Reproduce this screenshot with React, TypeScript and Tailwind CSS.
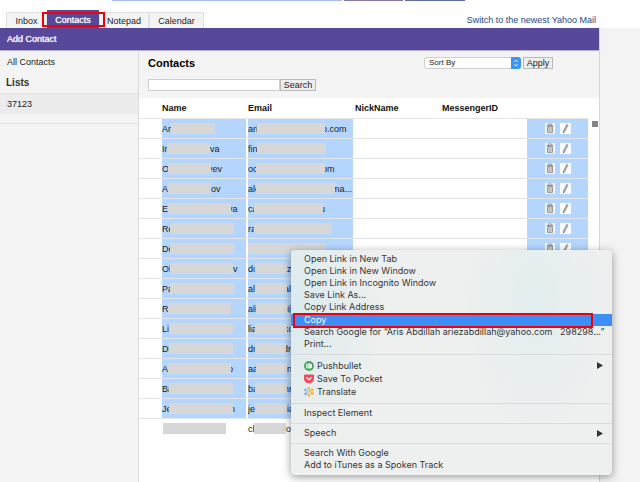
import React from "react";

type Masked = { pre: string; lead: number; mask: number; post?: string; tuck?: boolean };
type Contact = { name: Masked; email: Masked; selected: boolean };

const m = (pre: string, lead: number, mask: number, post = "", tuck = false): Masked => ({ pre, lead, mask, post, tuck });

const contacts: Contact[] = [
  { name: m("Ar", 9, 44), email: m("ari", 9, 68, "o.com", true), selected: true },
  { name: m("Ir", 5, 43, "va"), email: m("fin", 9, 69), selected: true },
  { name: m("O", 6, 43, "yev", true), email: m("oc", 8, 69, "om", true), selected: true },
  { name: m("A", 6, 43, "ov"), email: m("ale", 8, 79, "ma...", true), selected: true },
  { name: m("E", 6, 63, "va", true), email: m("ca", 6, 69, "u", true), selected: true },
  { name: m("Re", 8, 64), email: m("ra", 6, 78), selected: true },
  { name: m("De", 8, 64), email: m("", 0, 78), selected: true },
  { name: m("Ol", 8, 63, "v"), email: m("do", 7, 32, "z"), selected: true },
  { name: m("Pa", 8, 64), email: m("al", 7, 32, "ale", true), selected: true },
  { name: m("R", 6, 63), email: m("ali", 8, 31, "@"), selected: true },
  { name: m("Li", 7, 64), email: m("lia", 7, 32, "ko", true), selected: true },
  { name: m("Dr", 7, 64), email: m("dr", 7, 31, "dro", true), selected: true },
  { name: m("A", 6, 63, "o", true), email: m("aa", 8, 31, "n"), selected: true },
  { name: m("Ba", 7, 64), email: m("ba", 7, 32, "nn", true), selected: true },
  { name: m("Je", 7, 64, "n", true), email: m("je", 7, 32, "ia"), selected: true },
  { name: m("", 1, 63), email: m("cl", 6, 32, "o"), selected: false },
];

function MaskedText({ value, selected }: { value: Masked; selected: boolean }) {
  return (
    <div className={`flex h-[19px] items-center whitespace-nowrap ${selected ? "bg-[#b4d5fd]" : ""}`}>
      <span className="shrink-0" style={{ width: value.lead }}>
        {value.pre}
      </span>
      <span className="relative z-10 h-[11px] shrink-0 bg-[#d7d7d7]" style={{ width: value.mask }} />
      <span className={value.tuck ? "-ml-[3px]" : ""}>{value.post}</span>
    </div>
  );
}

function TrashIcon() {
  return (
    <svg viewBox="0 0 10 11" className="h-[11px] w-[10px]" aria-hidden="true">
      <rect width="10" height="11" fill="#f3f5f7" />
      <path d="M3.5 1.8V.9h3v.9" fill="none" stroke="#8a8a8a" strokeWidth=".8" />
      <path d="M1.7 2.4h6.6" stroke="#858585" strokeWidth="1" />
      <path d="M2.5 3.6h5v6h-5z" fill="#cfcfcf" stroke="#868686" strokeWidth=".8" />
      <path d="M4.200 4.200v4.800M5.800 4.200v4.800" stroke="#a5a5a5" strokeWidth=".5" />
    </svg>
  );
}

function PencilIcon() {
  return (
    <svg viewBox="0 0 11 11" className="h-[11px] w-[11px]" aria-hidden="true">
      <rect width="11" height="11" fill="#fbfcfd" />
      <path d="M6.600 1.200l1.600.8-3.200 6.400-1.700 1.600.1-2.300z" fill="#a6a6a6" stroke="#909090" strokeWidth=".5" />
      <path d="M3.300 8.600l-.1 1.600 1.100-.9z" fill="#444" />
    </svg>
  );
}

function PushbulletIcon() {
  return (
    <svg viewBox="0 0 10 10" className="size-[10px]" aria-hidden="true">
      <circle cx="5" cy="5" r="5" fill="#46a961" />
      <path d="M2.300 2.500h1.300v5H2.300zM4.300 2.500h1.300a2.500 2.500 0 0 1 0 5H4.300z" fill="#fff" />
    </svg>
  );
}

function PocketIcon() {
  return (
    <svg viewBox="0 0 10 10" className="size-[10px]" aria-hidden="true">
      <path d="M1 .5h8a1 1 0 0 1 1 1V4.600a5 4.900 0 0 1-10 0V1.500a1 1 0 0 1 1-1z" fill="#ee4a5e" />
      <path d="M2.700 3.600L5 5.800l2.300-2.200" fill="none" stroke="#fff" strokeWidth="1.300" strokeLinecap="round" strokeLinejoin="round" />
    </svg>
  );
}

function TranslateIcon() {
  return (
    <svg viewBox="0 0 10 10" className="size-[10px]" aria-hidden="true">
      <g fill="#6cabf0">
        <circle cx="1.500" cy="3" r="1.300" />
        <circle cx="1.600" cy="6.800" r="1.400" />
        <circle cx="3.600" cy="5" r=".9" />
      </g>
      <g fill="#f7b941">
        <circle cx="4.700" cy="1.500" r="1.400" />
        <circle cx="8" cy="2.800" r="1.500" />
        <circle cx="8.300" cy="6.400" r="1.500" />
        <circle cx="4.900" cy="8.400" r="1.400" />
        <path d="M4.700 1.400L5.600 4.500M8 2.800L6 4.800M8.300 6.400L6 5.400M4.900 8.500L5.400 6" stroke="#f7b941" strokeWidth="1.200" />
      </g>
    </svg>
  );
}

function MenuItem({ children, icon, submenu, active }: { children: React.ReactNode; icon?: React.ReactNode; submenu?: boolean; active?: boolean }) {
  return (
    <button
      type="button"
      role="menuitem"
      className={`flex w-full items-center gap-[3px] whitespace-pre pr-[9px] pl-[13px] text-left ${icon ? "h-[13px]" : "h-3"} ${active ? "bg-[#3f8ef8] text-white" : ""}`}
    >
      {icon}
      <span className="flex-1">{children}</span>
      {submenu && (
        <svg viewBox="0 0 6 7" className="h-[7px] w-[6px]" aria-hidden="true">
          <path d="M0 0l6 3.500L0 7z" fill="#333" />
        </svg>
      )}
    </button>
  );
}

function ContextMenu() {
  return (
    <div
      role="menu"
      className="absolute top-[250px] left-[291px] z-20 w-[321px] divide-y divide-[#dadcdc] rounded-[4px] bg-[#eeefef] bg-[radial-gradient(ellipse_90px_130px_at_0px_60px,#d9eaef,transparent),radial-gradient(ellipse_70px_130px_at_245px_50px,#e2eeef,transparent)] font-[family-name:Inter,sans-serif] text-[9px] leading-3 text-[#333637] shadow-[0_2px_8px_rgba(0,0,0,0.4)]"
    >
      <div className="pt-[3px] pb-1">
        <MenuItem>Open Link in New Tab</MenuItem>
        <MenuItem>Open Link in New Window</MenuItem>
        <MenuItem>Open Link in Incognito Window</MenuItem>
        <MenuItem>Save Link As...</MenuItem>
        <MenuItem>Copy Link Address</MenuItem>
        <div className="relative mt-px">
          <MenuItem active>Copy</MenuItem>
          <span className="pointer-events-none absolute -top-[1px] right-[19px] -bottom-[2px] left-[2px] border-2 border-[#f00008]" />
        </div>
        <MenuItem>{"Search Google for “Aris Abdillah ariezabdillah@yahoo.com   298298...”"}</MenuItem>
        <MenuItem>Print...</MenuItem>
      </div>
      <div className="pt-1 pb-[5px]">
        <MenuItem icon={<PushbulletIcon />} submenu>Pushbullet</MenuItem>
        <MenuItem icon={<PocketIcon />}>Save To Pocket</MenuItem>
        <MenuItem icon={<TranslateIcon />}>Translate</MenuItem>
      </div>
      <div className="pt-[3px] pb-1">
        <MenuItem>Inspect Element</MenuItem>
      </div>
      <div className="pt-[3px] pb-1">
        <MenuItem submenu>Speech</MenuItem>
      </div>
      <div className="pt-[3px] pb-1">
        <MenuItem>Search With Google</MenuItem>
        <MenuItem>Add to iTunes as a Spoken Track</MenuItem>
      </div>
    </div>
  );
}

function Tabs() {
  const tab = "flex h-4 items-center justify-center border border-b-0 border-[#e2e2e2] bg-[#f4f4f4]";
  return (
    <nav className="flex items-end pl-[6px]">
      <a href="#inbox" className={`${tab} w-[41px]`}>Inbox</a>
      <div className="relative">
        <a href="#contacts" className="flex h-[18px] w-[52px] items-center justify-center bg-[#58489a] pt-[2px] text-white [text-shadow:0_0_1px_white]">Contacts</a>
        <span className="pointer-events-none absolute top-[2px] -right-[6px] bottom-[1px] -left-[5px] border-2 border-[#f00008]" />
      </div>
      <a href="#notepad" className={`${tab} w-[50px]`}>Notepad</a>
      <a href="#calendar" className={`${tab} w-[55px]`}>Calendar</a>
    </nav>
  );
}

function Sidebar() {
  return (
    <aside className="w-[139px] shrink-0 border-r border-[#dcdcdc] bg-[#f4f4f4]">
      <a href="#all" className="flex h-[21px] items-center pl-[7px]">All Contacts</a>
      <h2 className="flex h-[22px] items-center border-b border-[#e3e3e3] pt-px pl-[6px] text-[10px] font-bold text-[#333]">Lists</h2>
      <a href="#37123" className="flex h-5 items-center bg-[#ececec] pl-[7px]">37123</a>
      <div className="h-[10px] border-b border-[#e3e3e3]" />
    </aside>
  );
}

function ContactTable() {
  const head = "h-[21px] border-b border-[#e6e6e6] p-0 text-left font-bold text-[#111]";
  return (
    <table className="w-full table-fixed border-separate border-spacing-0">
      <thead>
        <tr>
          <th className={`${head} w-[109px] pl-[23px]`}>Name</th>
          <th className={`${head} w-[107px]`}>Email</th>
          <th className={`${head} w-[87px]`}>NickName</th>
          <th className={head}>MessengerID</th>
          <th className={`${head} w-[61px]`} aria-label="Actions" />
        </tr>
      </thead>
      <tbody>
        {contacts.map((c, i) => {
          const cell = c.selected ? "border-b border-[#e2e5e8] p-0" : "p-0";
          return (
            <tr key={i}>
              <td className={`${cell} pr-[2px] pl-[23px]`}><MaskedText value={c.name} selected={c.selected} /></td>
              <td className={`${cell} pr-[2px]`}><MaskedText value={c.email} selected={c.selected} /></td>
              <td className={cell} />
              <td className={cell} />
              <td className={cell}>
                {c.selected && (
                  <div className="flex h-[19px] items-center gap-[5px] bg-[#b4d5fd] pl-[18px]">
                    <button type="button" aria-label="Delete"><TrashIcon /></button>
                    <button type="button" aria-label="Edit"><PencilIcon /></button>
                  </div>
                )}
              </td>
            </tr>
          );
        })}
      </tbody>
    </table>
  );
}

export default function App() {
  return (
    <div className="relative flex min-h-screen flex-col overflow-hidden bg-white font-['Liberation_Sans',Arial,sans-serif] text-[9px] leading-3 text-[#222]">
      <header className="flex h-7 flex-col">
        <div className="flex h-[10px] items-start gap-[2px] pl-[112px]">
          <span className="h-px w-[230px] bg-[#a3bff7]" />
          <span className="h-px w-[59px] bg-[#8878b0]" />
          <span className="h-px w-[60px] bg-[#5f70a0]" />
        </div>
        <div className="flex items-end justify-between pr-11">
          <Tabs />
          <a href="#switch" className="pb-[2px] text-[#24488f]">Switch to the newest Yahoo Mail</a>
        </div>
      </header>
      <div className="flex flex-1">
        <div className="flex min-w-0 flex-1 flex-col border-r border-[#d6d6d6]">
          <div className="flex h-[23px] items-center border-b border-[#b5aed3] bg-[#58489a] pl-[7px] text-white [text-shadow:0_0_1px_white]">
            <a href="#add">Add Contact</a>
          </div>
          <div className="flex flex-1">
            <Sidebar />
            <main className="min-w-0 flex-1">
              <div className="bg-[#f4f4f4] pt-[6px] pr-[46px] pb-[7px] pl-[9px]">
                <div className="flex items-center justify-between">
                  <h1 className="text-[11px] font-bold text-black">Contacts</h1>
                  <form className="flex items-center gap-[2px]">
                    <div className="relative">
                      <select aria-label="Sort contacts" className="block h-3 w-[97px] appearance-none rounded-[3px] border border-[#cfcfcf] bg-white pl-1 text-[8px] leading-[10px]">
                        <option>Sort By</option>
                      </select>
                      <svg viewBox="0 0 10 12" className="pointer-events-none absolute top-0 right-0 h-3 w-[10px]" aria-hidden="true">
                        <path d="M0 0h7a3 3 0 0 1 3 3v6a3 3 0 0 1-3 3H0z" fill="#3d94f8" />
                        <path d="M3.200 4.800L5 3l1.800 1.800M3.200 7.200L5 9l1.800-1.800" fill="none" stroke="#fff" strokeWidth=".9" />
                      </svg>
                    </div>
                    <button type="button" className="h-3 w-[30px] border border-[#b9b9b9] bg-[#eee] leading-[10px]">Apply</button>
                  </form>
                </div>
                <form className="mt-[10px] flex">
                  <input type="search" aria-label="Search contacts" className="h-3 w-[132px] border border-[#cfcfcf] bg-white px-1" />
                  <button type="button" className="h-3 w-9 border border-[#b9b9b9] bg-[#eee] leading-[10px]">Search</button>
                </form>
              </div>
              <div className="flex bg-white">
                <div className="min-w-0 flex-1"><ContactTable /></div>
                <div className="w-[11px] pt-[23px] pl-1">
                  <div className="size-[6px] bg-[#858585]" />
                </div>
              </div>
            </main>
          </div>
        </div>
        <div className="w-10 bg-[#f3f3f3]" />
      </div>
      <ContextMenu />
    </div>
  );
}
